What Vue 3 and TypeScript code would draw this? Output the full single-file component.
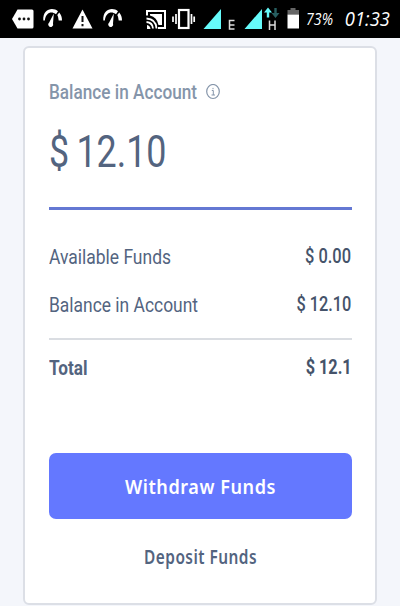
<script setup lang="ts">
import type { Directive } from 'vue'

interface FundRow {
  label: string
  labelWidth: number
  value: string
  valueWidth: number
}

const rows: FundRow[] = [
  { label: 'Available Funds', labelWidth: 122, value: '$ 0.00', valueWidth: 46 },
  { label: 'Balance in Account', labelWidth: 149, value: '$ 12.10', valueWidth: 55 },
]

// Condenses a line of text to the given width in pixels.
const vFit: Directive<HTMLElement, number> = {
  mounted(el, binding) {
    const natural = el.getBoundingClientRect().width
    el.style.transform = `scaleX(${binding.value / natural})`
  },
}
</script>

<template>
  <div class="screen">
    <header class="status">
      <svg class="icons" width="306" height="38" viewBox="0 0 306 38" aria-hidden="true">
        <path fill="#fff" d="M17.500 9.500H32q1.500 0 1.500 1.500v16q0 1.500-1.500 1.500H17.500L12 19z" />
        <g fill="#111"><circle cx="19.500" cy="19" r="1.400" /><circle cx="24" cy="19" r="1.400" /><circle cx="28.500" cy="19" r="1.400" /></g>
        <g v-for="x in [0, 60]" :key="x" :transform="`translate(${x} 0)`" fill="#fff">
          <path d="M43.300 20.500C42.500 8 53.500 7 58 11.300L56 14.200C51.500 11 46 12 44.800 20.500z" />
          <path d="M59.200 12.500Q62 15.500 62 20.500H58.700Q58.500 17 57.300 15z" />
          <path d="M53.800 13.500L53 23.500a2.500 2.500 0 1 1-3.800-1z" />
        </g>
        <path fill="#fff" d="M82.500 9.500L92.500 28.500H72.500z" />
        <path d="M82.500 16v6M82.500 24v2.200" stroke="#111" stroke-width="2" />
        <g fill="none" stroke="#fff">
          <path d="M147 15.500V11H165V28H158" stroke-width="2" />
          <path d="M146.500 18.500Q156 19 156.500 28.500M146.500 22Q152.500 22.500 153 28.500" stroke-width="1.800" />
          <rect x="179" y="10" width="9.500" height="18" stroke-width="2.200" />
          <path d="M176 14v10M173 16.500v5.500M191.500 14v10M194.200 16.500v5.500" stroke-width="1.700" />
        </g>
        <path fill="#fff" d="M147 25Q150 25.500 150.500 29H147zM150 14H162V25H158.500Q157 17 150 15.500z" />
        <path fill="#66fbfb" d="M221 9V29H203.500zM262 9V29H244.500z" />
        <path d="M234.500 20.500H229.500V29H234.500M229.500 25H234.500M269.500 20.500V30M275 20.500V30M269.500 25H275" fill="none" stroke="#ddd" stroke-width="1.500" />
        <path fill="#66fbfb" d="M268 7.500l4 5h-2.800v5h-2.400v-5H264z" />
        <path fill="#275e60" d="M275.500 18l4-5h-2.800V8h-2.400v5h-2.800z" />
        <path fill="#666" d="M290.500 8h5v2h3.500v4.500H287.500V10h3z" />
        <path fill="#fff" d="M287.500 14.500H299V28.500H287.500z" />
      </svg>
      <span v-fit="27" class="battery">73%</span>
      <span v-fit="45" class="clock">01:33</span>
    </header>

    <main class="page">
      <section class="card">
        <div class="title">
          <span v-fit="148" class="title-text">Balance in Account</span>
          <svg width="16" height="16" viewBox="0 0 16 16" fill="none" stroke="#8595aa" aria-hidden="true">
            <ellipse cx="8" cy="7.500" rx="6.300" ry="7" stroke-width="1.200" />
            <path d="M6.800 6.500H8.300V11M6.500 11H10M8 3.900V5.200" stroke-width="1" />
          </svg>
        </div>
        <div class="amount"><span v-fit="117.5" class="start">$ 12.10</span></div>
        <div class="rows">
          <div v-for="row in rows" :key="row.label" class="row">
            <span v-fit="row.labelWidth" class="start">{{ row.label }}</span>
            <span v-fit="row.valueWidth" class="value">{{ row.value }}</span>
          </div>
        </div>
        <div class="row total">
          <span v-fit="38.5" class="start">Total</span>
          <span v-fit="46" class="value">$ 12.1</span>
        </div>
        <button class="withdraw"><span v-fit="151" class="middle">Withdraw Funds</span></button>
        <button class="deposit"><span v-fit="113" class="middle">Deposit Funds</span></button>
      </section>
    </main>
  </div>
</template>

<style>
body {
  background: #f4f6fb;
}
</style>

<style scoped>
.screen {
  height: 606px;
  overflow: hidden;
  font-family: Roboto, sans-serif;
  color: #53647f;
  background: #f4f6fb;
}
.status {
  display: flex;
  height: 38px;
  background: #000;
  color: #fff;
}
.icons {
  flex: none;
}
.battery,
.clock {
  flex: none;
  font-family: 'Open Sans', sans-serif;
  font-style: italic;
  font-weight: 500;
  line-height: 39px;
  white-space: nowrap;
}
.battery {
  font-size: 16px;
  transform-origin: left;
}
.clock {
  margin-left: auto;
  margin-right: 10px;
  font-size: 19.500px;
  line-height: 38px;
  transform-origin: right;
}
.page {
  padding: 8px 23px 0;
}
.card {
  box-sizing: border-box;
  width: 354px;
  height: 559px;
  padding: 30px 23px 0 24px;
  background: #fff;
  border: 2px solid #dcdfe6;
  border-radius: 6px;
}
.title {
  display: flex;
  align-items: center;
  height: 28px;
  font-size: 20px;
  font-weight: 500;
  color: #8595aa;
}
.title-text {
  flex: none;
  margin-right: -16.500px;
  white-space: nowrap;
  transform-origin: left;
}
.start,
.value,
.middle {
  display: inline-block;
  white-space: nowrap;
}
.start {
  transform-origin: left;
}
.value {
  margin: -1px 0.7px 0 0;
  color: #45536a;
  font-weight: 500;
  transform-origin: right;
}
.amount {
  height: 104px;
  box-sizing: border-box;
  padding-top: 20px;
  border-bottom: 3px solid #6478d3;
  font-size: 44.500px;
  line-height: 52px;
  word-spacing: -2px;
}
.rows {
  height: 130px;
  box-sizing: border-box;
  padding-top: 23px;
  border-bottom: 2px solid #dadde2;
}
.row {
  display: flex;
  justify-content: space-between;
  height: 48px;
  font-size: 20px;
  line-height: 48px;
}
.total {
  margin-top: 4px;
  font-weight: 700;
}
.total .value {
  font-weight: 700;
}
.withdraw,
.deposit {
  display: block;
  width: 303px;
  padding: 0;
  border: 0;
  font-family: 'Noto Sans', sans-serif;
  font-size: 19.500px;
  font-weight: 600;
  letter-spacing: 0.6px;
}
.withdraw {
  height: 66px;
  margin-top: 61px;
  border-radius: 7px;
  background: #6478ff;
  color: #fff;
}
.deposit {
  height: 40px;
  margin-top: 17px;
  background: transparent;
  color: #53647f;
}
</style>
